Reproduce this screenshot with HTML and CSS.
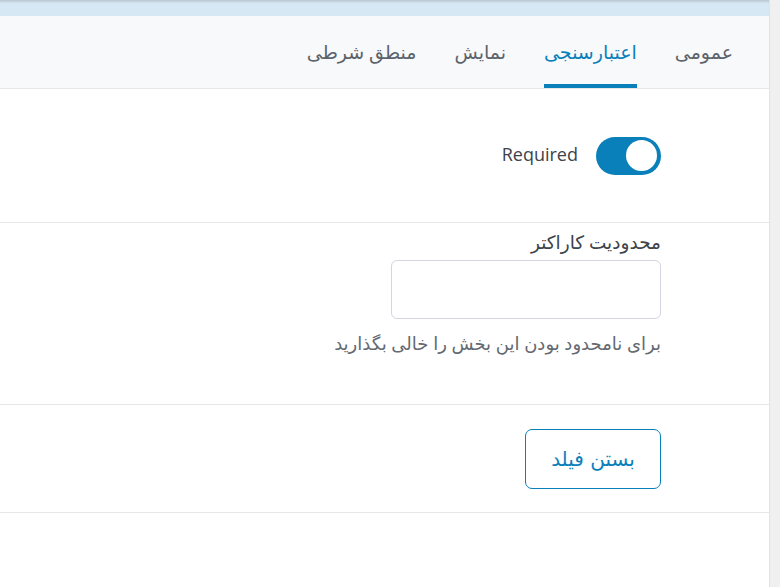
FILE: index.html
```html
<!DOCTYPE html>
<html lang="fa" dir="rtl">
<head>
<meta charset="utf-8">
<link rel="stylesheet" href="styles.css">
</head>
<body>
<div class="page">
  <aside class="strip"></aside>
  <main class="panel">
    <div class="topband"></div>
    <nav class="tabs">
      <span class="tab">عمومی</span>
      <span class="tab active">اعتبارسنجی</span>
      <span class="tab">نمایش</span>
      <span class="tab">منطق شرطی</span>
    </nav>
    <section class="sec sec-toggle">
      <div class="toggle-row">
        <span class="switch"><span class="knob"></span></span>
        <span class="switch-label" dir="ltr">Required</span>
      </div>
    </section>
    <section class="sec sec-field">
      <label class="field-label">محدودیت کاراکتر</label>
      <input class="field-input" type="text">
      <p class="help">برای نامحدود بودن این بخش را خالی بگذارید</p>
    </section>
    <section class="sec sec-btn">
      <button class="btn-outline">بستن فیلد</button>
    </section>
  </main>
</div>
</body>
</html>
```

FILE: styles.css
```css
* { box-sizing: border-box; }
html, body { margin: 0; padding: 0; }
body {
  font-family: "Open Sans", "DejaVu Sans", sans-serif;
  background: #fff;
  color: #32373c;
}
.page {
  display: flex;
  flex-direction: row;
  height: 587px;
  width: 780px;
  overflow: hidden;
}
.strip {
  width: 11px;
  flex: none;
  background: #f0f0f1;
  box-shadow: inset 1px 0 1px rgba(0,0,0,0.06);
}
.panel {
  flex: 1;
  display: flex;
  flex-direction: column;
  background: #fff;
}
.topband {
  height: 16px;
  flex: none;
  background: #d6e8f3;
  box-shadow: inset 0 3px 2px -1px rgba(0,0,0,0.12);
}
.tabs {
  height: 73px;
  flex: none;
  display: flex;
  gap: 38px;
  padding-right: 36px;
  background: #f8f9fb;
  border-bottom: 1px solid #e6e7ea;
}
.tab {
  height: 72px;
  display: flex;
  align-items: center;
  font-size: 19px;
  color: #5c636b;
}
.tab.active {
  color: #0a80bb;
  box-shadow: inset 0 -4px 0 #0a80bb;
}
.sec {
  border-bottom: 1px solid #e6e7ea;
  padding-right: 108px;
}
.sec-toggle {
  height: 134px;
  display: flex;
  align-items: center;
}
.toggle-row {
  display: flex;
  align-items: center;
  gap: 18px;
}
.switch {
  width: 65px;
  height: 38px;
  border-radius: 19px;
  background: #0a80bb;
  display: flex;
  align-items: center;
  padding: 0 4px;
  direction: ltr;
  justify-content: flex-end;
}
.knob {
  width: 31px;
  height: 31px;
  border-radius: 50%;
  background: #fff;
}
.switch-label {
  font-size: 18px;
  color: #3c434a;
  margin-top: -3px;
}
.sec-field {
  height: 182px;
  display: flex;
  flex-direction: column;
  align-items: flex-start;
  padding-top: 5px;
}
.field-label {
  font-size: 18.5px;
  line-height: 27px;
  font-weight: normal;
  color: #3c434a;
}
.field-input {
  margin-top: 5px;
  width: 270px;
  height: 59px;
  border: 1px solid #d6d4e0;
  border-radius: 6px;
  background: #fff;
  outline: none;
  font: inherit;
}
.help {
  margin: 11px 0 0;
  font-size: 18px;
  line-height: 26px;
  color: #646970;
}
.sec-btn {
  height: 108px;
  display: flex;
  align-items: center;
}
.btn-outline {
  width: 136px;
  height: 60px;
  border: 1px solid #0a80bb;
  border-radius: 7px;
  background: #fff;
  color: #0a80bb;
  font-family: "DejaVu Sans", sans-serif;
  font-size: 20px;
  padding: 0;
}
```
